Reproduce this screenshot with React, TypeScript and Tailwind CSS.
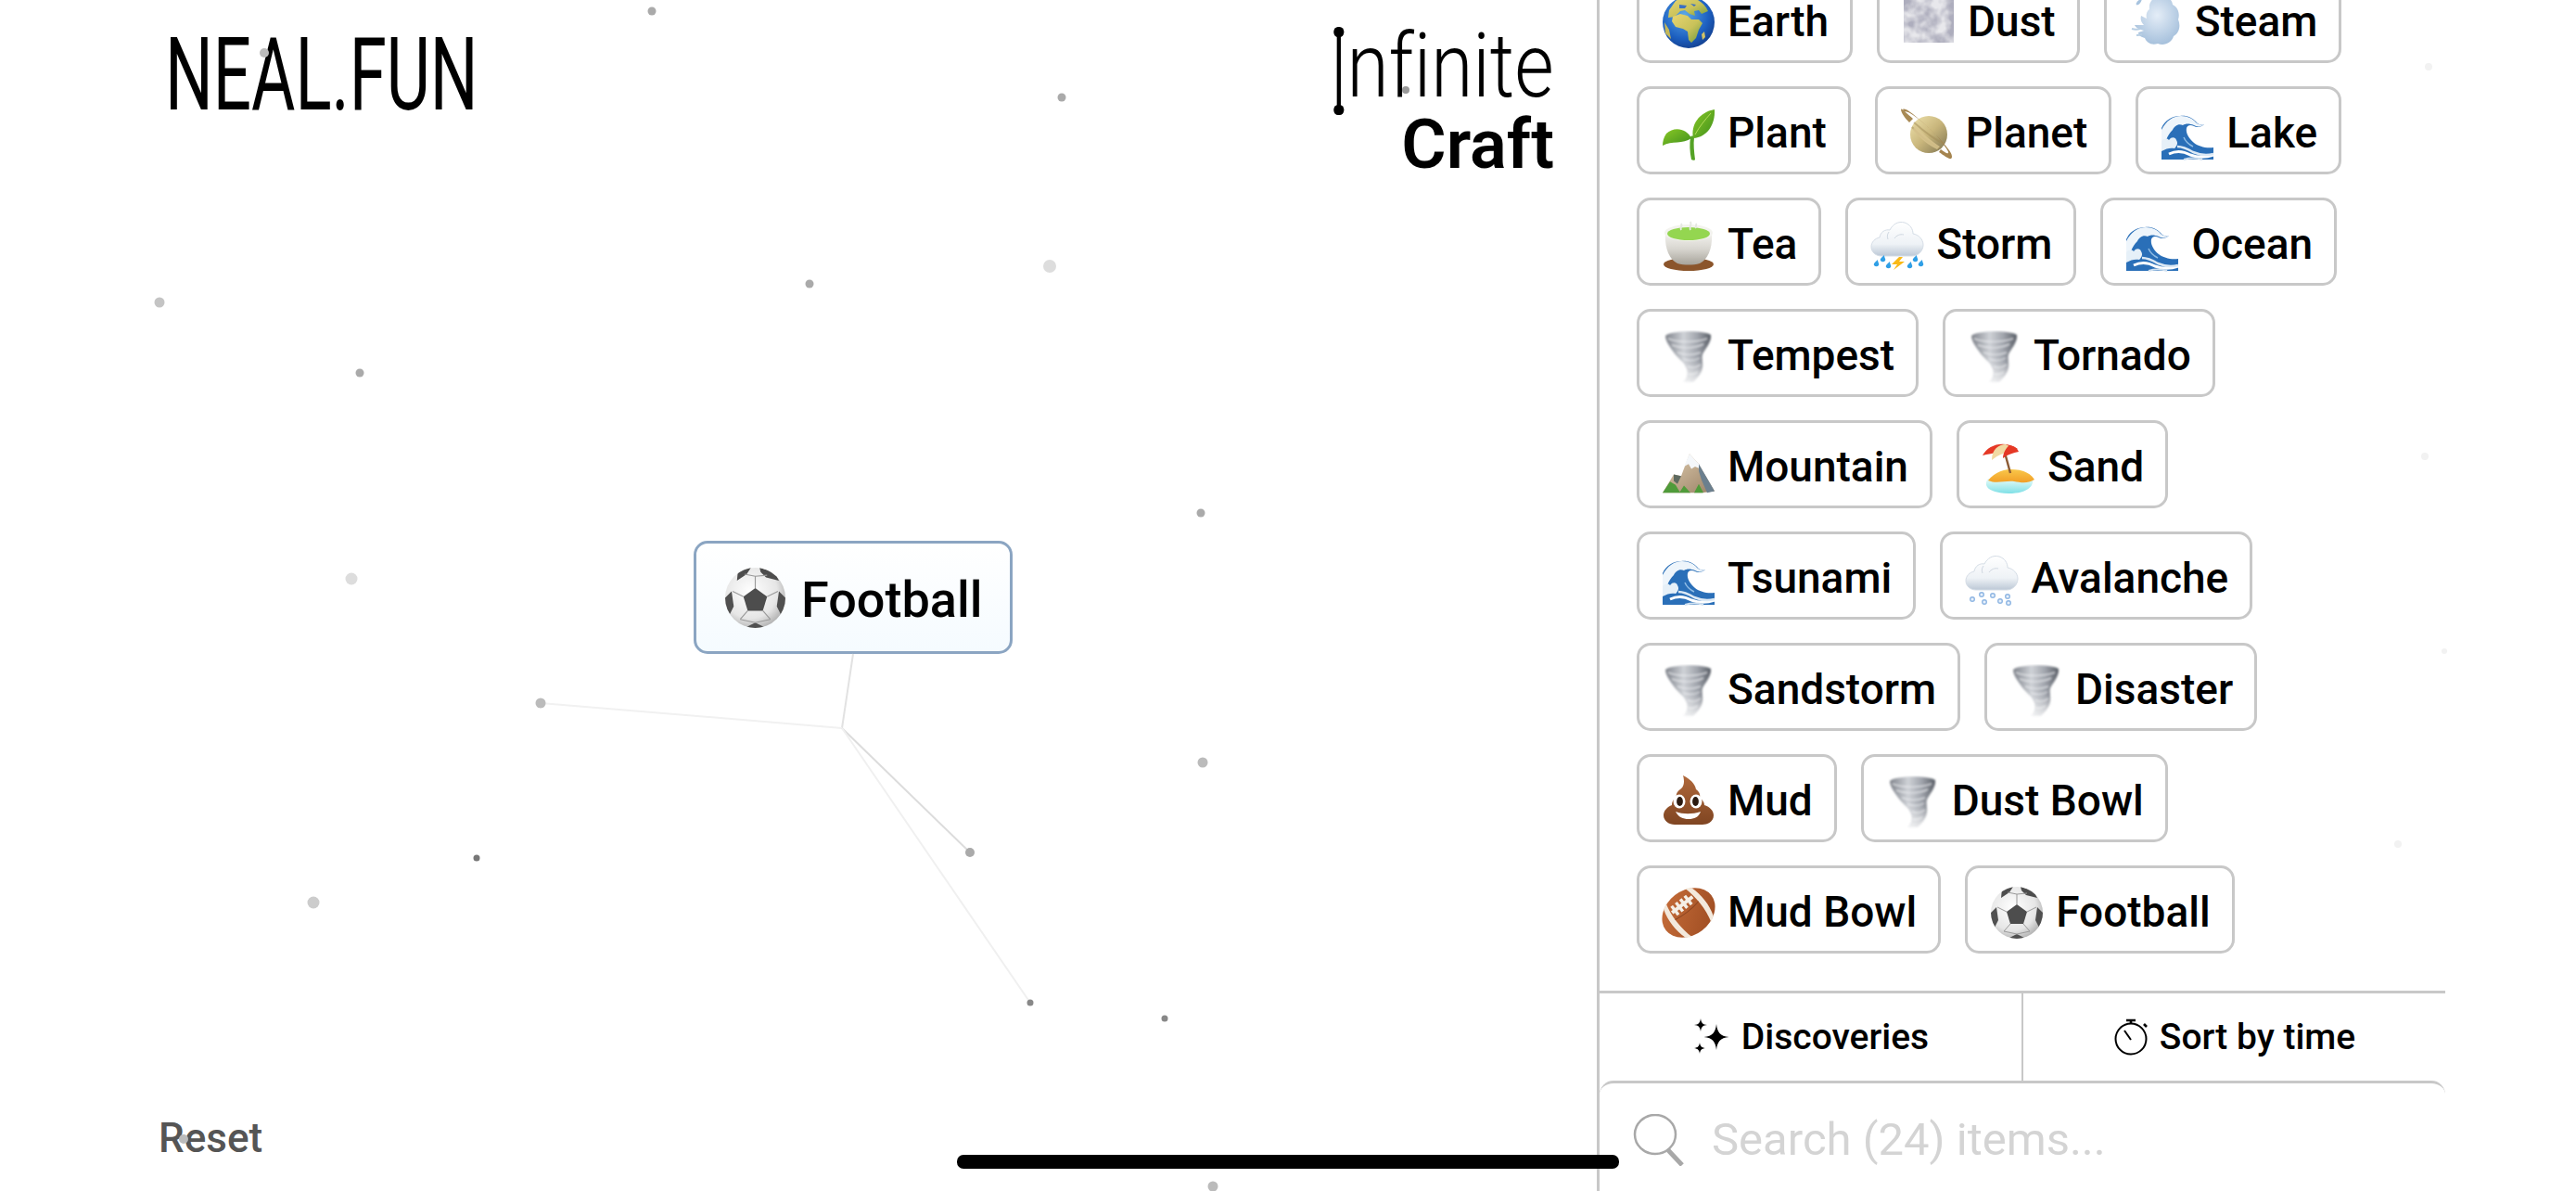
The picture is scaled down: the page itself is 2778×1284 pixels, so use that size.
const dots = [
  { x: 703, y: 12, r: 4.5, fill: '#aaaaaa' },
  { x: 1145, y: 105, r: 4.5, fill: '#aaaaaa' },
  { x: 172, y: 326, r: 5.5, fill: '#c4c4c4' },
  { x: 388, y: 402, r: 4.5, fill: '#aaaaaa' },
  { x: 873, y: 306, r: 4.5, fill: '#aaaaaa' },
  { x: 1132, y: 287, r: 7, fill: '#dddddd' },
  { x: 379, y: 624, r: 6.5, fill: '#dddddd' },
  { x: 1295, y: 553, r: 4.5, fill: '#aaaaaa' },
  { x: 583, y: 758, r: 5.5, fill: '#bbbbbb' },
  { x: 1297, y: 822, r: 5.5, fill: '#bbbbbb' },
  { x: 514, y: 925, r: 3.5, fill: '#777777' },
  { x: 338, y: 973, r: 6.5, fill: '#cccccc' },
  { x: 1046, y: 919, r: 5, fill: '#aaaaaa' },
  { x: 1111, y: 1081, r: 3.5, fill: '#888888' },
  { x: 1256, y: 1098, r: 3.5, fill: '#888888' },
  { x: 1308, y: 1279, r: 5.5, fill: '#bbbbbb' },
  { x: 285, y: 57, r: 5, fill: '#bbbbbb' },
  { x: 1516, y: 97, r: 4, fill: '#999999' },
  { x: 198, y: 1228, r: 5, fill: '#bbbbbb' },
  { x: 2619, y: 72, r: 4, fill: '#f2f2f2' },
  { x: 2615, y: 492, r: 4, fill: '#f2f2f2' },
  { x: 2636, y: 702, r: 3, fill: '#f2f2f2' },
  { x: 2586, y: 910, r: 4, fill: '#f2f2f2' },
];

const items = [
  ['earth', 'Earth'],
  ['dust', 'Dust'],
  ['steam', 'Steam'],
  ['plant', 'Plant'],
  ['planet', 'Planet'],
  ['wave', 'Lake'],
  ['tea', 'Tea'],
  ['storm', 'Storm'],
  ['wave', 'Ocean'],
  ['tornado', 'Tempest'],
  ['tornado', 'Tornado'],
  ['mountain', 'Mountain'],
  ['beach', 'Sand'],
  ['wave', 'Tsunami'],
  ['snow', 'Avalanche'],
  ['tornado', 'Sandstorm'],
  ['tornado', 'Disaster'],
  ['poop', 'Mud'],
  ['tornado', 'Dust Bowl'],
  ['football', 'Mud Bowl'],
  ['soccer', 'Football'],
];

function SharedDefs() {
  return (
    <svg className="absolute h-0 w-0" aria-hidden="true">
      <defs>
        <radialGradient id="earthFill" cx="0.42" cy="0.35" r="0.72">
          <stop offset="0" stopColor="#5aa7e8" />
          <stop offset="0.65" stopColor="#1c5fc0" />
          <stop offset="1" stopColor="#123a86" />
        </radialGradient>
        <linearGradient id="landFill" x1="0" y1="0" x2="1" y2="1">
          <stop offset="0" stopColor="#e8d572" />
          <stop offset="0.55" stopColor="#c9c25a" />
          <stop offset="1" stopColor="#6d9a3e" />
        </linearGradient>
        <filter id="dustNoise" x="0" y="0" width="1" height="1" colorInterpolationFilters="sRGB">
          <feTurbulence type="fractalNoise" baseFrequency="0.06" numOctaves="3" seed="4" />
          <feColorMatrix values="0 0 0 0 0.68  0 0 0 0 0.68  0 0 0 0 0.74  2.6 0 0 0 -0.75" />
        </filter>
        <radialGradient id="steamFill" cx="0.5" cy="0.4" r="0.7">
          <stop offset="0" stopColor="#e4edf7" />
          <stop offset="1" stopColor="#9dbad8" />
        </radialGradient>
        <linearGradient id="leafFill" x1="0" y1="0" x2="1" y2="1">
          <stop offset="0" stopColor="#8ac926" />
          <stop offset="1" stopColor="#3f8f1c" />
        </linearGradient>
        <linearGradient id="planetFill" x1="0" y1="0" x2="1" y2="1">
          <stop offset="0" stopColor="#efe3ad" />
          <stop offset="0.5" stopColor="#c9b67c" />
          <stop offset="1" stopColor="#7d7350" />
        </linearGradient>
        <linearGradient id="bowlFill" x1="0" y1="0" x2="0" y2="1">
          <stop offset="0" stopColor="#f4f3ef" />
          <stop offset="0.5" stopColor="#d8d6d0" />
          <stop offset="1" stopColor="#a7a39a" />
        </linearGradient>
        <linearGradient id="cloudFill" x1="0" y1="0" x2="0" y2="1">
          <stop offset="0" stopColor="#ffffff" />
          <stop offset="0.65" stopColor="#eef2f6" />
          <stop offset="1" stopColor="#bcc8d6" />
        </linearGradient>
        <linearGradient id="tornadoFill" x1="0" y1="0" x2="1" y2="0">
          <stop offset="0" stopColor="#7f838b" />
          <stop offset="0.4" stopColor="#cfd2d7" />
          <stop offset="0.7" stopColor="#a0a4ac" />
          <stop offset="1" stopColor="#5a5f67" />
        </linearGradient>
        <filter id="softBlur">
          <feGaussianBlur stdDeviation="1" />
        </filter>
        <linearGradient id="tornadoFade" x1="0" y1="0" x2="0" y2="1">
          <stop offset="0.55" stopColor="#ffffff" />
          <stop offset="1" stopColor="#ffffff" stopOpacity="0.2" />
        </linearGradient>
        <mask id="tornadoMask">
          <rect width="56" height="58" fill="url(#tornadoFade)" />
        </mask>
        <linearGradient id="rockFill" x1="0" y1="0" x2="1" y2="1">
          <stop offset="0" stopColor="#e2cfb2" />
          <stop offset="1" stopColor="#9a8266" />
        </linearGradient>
        <linearGradient id="seaFill" x1="0" y1="0" x2="0" y2="1">
          <stop offset="0" stopColor="#e6fbf9" />
          <stop offset="1" stopColor="#7fe0e6" />
        </linearGradient>
        <linearGradient id="sandFill" x1="0" y1="0" x2="0" y2="1">
          <stop offset="0" stopColor="#f9c74a" />
          <stop offset="1" stopColor="#f29f27" />
        </linearGradient>
        <linearGradient id="poopFill" x1="0" y1="0" x2="0" y2="1">
          <stop offset="0" stopColor="#b0683a" />
          <stop offset="1" stopColor="#7f4522" />
        </linearGradient>
        <linearGradient id="footballFill" x1="0" y1="0" x2="1" y2="1">
          <stop offset="0" stopColor="#c96f3b" />
          <stop offset="1" stopColor="#9b4a20" />
        </linearGradient>
        <radialGradient id="soccerFill" cx="0.42" cy="0.4" r="0.68">
          <stop offset="0" stopColor="#ffffff" />
          <stop offset="0.65" stopColor="#e6e6e6" />
          <stop offset="1" stopColor="#a5a5a5" />
        </radialGradient>
        <clipPath id="soccerClip">
          <circle cx="28" cy="28" r="28" />
        </clipPath>
        <clipPath id="earthClip">
          <circle cx="28" cy="28" r="28" />
        </clipPath>
      </defs>
    </svg>
  );
}

function CloudShape() {
  return (
    <g>
      <path
        d="M11 39c-6 0-11-4-11-10 0-5 4-9 9-10 1-6 6-9 11-8 3-6 9-10 16-8 6 2 9 7 9 12 6 1 11 6 11 12s-5 12-12 12z"
        fill="url(#cloudFill)"
        stroke="#d5dde6"
        strokeWidth="1"
      />
      <path d="M19 13c-2 3-2 5-1 8M35 16c-4-1-8 1-10 4" stroke="#d0d8e1" strokeWidth="1" fill="none" />
    </g>
  );
}

function EmojiArt({ name }: { name: string }) {
  switch (name) {
    case 'earth':
      return (
        <g>
          <circle cx="28" cy="28" r="28" fill="url(#earthFill)" />
          <g clipPath="url(#earthClip)">
            <path
              d="M14 5c6-4 16-5 24-1 5 3 9 7 11 12l-7 3-3-4-5 1 1 5-6-2-5-4-5 1-6 6-7 1 1-8z"
              fill="url(#landFill)"
            />
            <path
              d="M11 22l8-3 8 2 4 4 8 0 4 4-4 7-3 9-5 5-3-3-1-9-5-3-8-2-4-6z"
              fill="url(#landFill)"
            />
            <path d="M2 28l5 8 2 10-6-6z" fill="#c4b85a" />
            <path d="M42 41l3-3 1 6-3 3z" fill="#d3c365" />
            <path d="M18 9l8 1-2 3-6 0zM30 8l6 1-2 2z" fill="#3a6fc4" />
          </g>
        </g>
      );
    case 'dust':
      return (
        <g>
          <rect x="1" y="0" width="54" height="50" fill="#e8e8ec" />
          <rect x="1" y="0" width="54" height="50" filter="url(#dustNoise)" />
        </g>
      );
    case 'steam':
      return (
        <g>
          <path
            d="M30 0c8-2 15 2 16 9 6 3 8 10 6 16 3 7 1 15-5 18-2 7-10 11-17 8-7 2-12-1-14-6-4-1-7-3-7-6l6-2c-4-1-9-3-10-6l10 0c-3-3-4-6-3-10l6 3c-1-4 0-8 3-10-1-7 3-12 9-14z"
            fill="url(#steamFill)"
          />
          <path d="M7 7c2-3 5-5 6-4-1 3-2 5-4 6-2 1-3 0-2-2z" fill="#a7c3de" />
          <path d="M2 35c3 1 6 1 9 0M7 42c2 0 4 0 6-1" stroke="#b8cfe4" strokeWidth="2" fill="none" />
        </g>
      );
    case 'plant':
      return (
        <g>
          <path d="M31 56c-2-9-2-17-1-24 0-2 4-2 4 0-1 8 0 16 1 24 0 1-3 1-4 0z" fill="#55a326" />
          <path d="M33 33c-3-14 6-28 23-31 1 16-8 30-23 31z" fill="url(#leafFill)" />
          <path d="M31 33C26 22 12 20 4 28 1 32 0 37 0 41c10-6 22-1 31-8z" fill="url(#leafFill)" />
          <path d="M35 29c5-9 10-15 17-23" stroke="#b4dc5a" strokeWidth="1" fill="none" />
        </g>
      );
    case 'planet':
      return (
        <g>
          <path d="M5 5c-4-4-5-4-5-3 0 3 4 9 9 14l4-4c-3-3-6-5-8-7z" fill="#a88a55" />
          <circle cx="30" cy="29" r="20" fill="url(#planetFill)" />
          <path d="M12 21c8 9 18 18 31 23M14 16c9 8 20 17 32 23" stroke="#9f8a56" strokeWidth="2" opacity="0.5" fill="none" />
          <path
            d="M2 2c2-2 9 3 18 11 12 10 24 22 32 33 3 4 4 8 2 9s-7-3-13-7l2-3c4 3 7 5 8 4s-2-5-5-9C39 29 22 13 8 5 5 4 4 4 4 5l-2-3z"
            fill="#a5844f"
          />
          <path d="M13 24c8 9 17 17 26 21l3-3C32 36 22 26 15 19z" fill="#d9c690" opacity="0.8" />
        </g>
      );
    case 'wave':
      return (
        <g>
          <path
            d="M0 56V22C4 13 12 9 20 9c7-1 13 2 17 6 2 3 5 4 9 3-3 3-8 4-11 2-4-2-7-1-8 2-1 5 2 11 8 16 5 4 13 6 21 5v13z"
            fill="#2a6fb8"
          />
          <path
            d="M0 24C5 14 13 9 21 9c7 0 13 3 16 7 2 2 5 3 9 2-3 3-8 3-11 1-5-2-9-2-12 0-5-2-9 1-11 5-3 3-5 6-7 11-2 1-4 3-5 5z"
            fill="#eef5fb"
          />
          <path d="M0 36c3-3 6-3 8-1 3-4 7-3 8 0 2 3 1 6-2 9-4-1-9 0-14 3z" fill="#e6f0f8" />
          <path d="M8 50c8-4 16-3 23 1 8 3 17 3 25 0" stroke="#ffffff" strokeWidth="3" fill="none" />
          <path d="M17 42c7 0 12 3 17 6 7 3 14 4 22 2" stroke="#dce9f5" strokeWidth="2.500" fill="none" />
          <path d="M24 32c2 5 6 8 10 10" stroke="#8fbce4" strokeWidth="1.500" fill="none" />
          <path d="M24 56c7-2 13-2 20 0" stroke="#cfe0f0" strokeWidth="2" fill="none" />
        </g>
      );
    case 'tea':
      return (
        <g>
          <ellipse cx="28" cy="49" rx="27" ry="7" fill="#8b552b" />
          <path d="M3 15h50c1 14-3 28-13 33-7 2-17 2-24 0C6 43 2 29 3 15z" fill="url(#bowlFill)" />
          <ellipse cx="28" cy="15" rx="26" ry="9" fill="#f3f3ee" />
          <ellipse cx="28" cy="16" rx="23" ry="7" fill="#94d650" />
          <path d="M20 12c-2-3 2-4 0-7M30 12c-2-3 2-5 0-9M36 10c-1-2 1-3 0-5" stroke="#e5e8e2" strokeWidth="2" fill="none" />
        </g>
      );
    case 'storm':
      return (
        <g>
          <g transform="translate(0 1)">
            <CloudShape />
          </g>
          <path d="M30 41l-8 8h6l-4 6 12-9h-6l4-5z" fill="#f9b916" />
          {[
            [4, 49],
            [11, 44],
            [17, 51],
            [40, 51],
            [46, 44],
            [52, 49],
          ].map(([x, y]) => (
            <path key={`${x}-${y}`} d={`M${x + 3} ${y - 5}c0 3 2 4 1 6a3 3 0 0 1-5 0c-1-2 2-4 4-6z`} fill="#2f9fe6" />
          ))}
        </g>
      );
    case 'snow':
      return (
        <g>
          <g transform="translate(0 1)">
            <CloudShape />
          </g>
          {[
            [7, 50],
            [17, 45],
            [20, 53],
            [29, 46],
            [37, 52],
            [45, 47],
            [46, 54],
          ].map(([x, y]) => (
            <circle key={`${x}-${y}`} cx={x} cy={y} r="2.3" fill="#e9f1fb" stroke="#8fb6e3" strokeWidth="1.4" />
          ))}
        </g>
      );
    case 'tornado':
      return (
        <g mask="url(#tornadoMask)">
          <g filter="url(#softBlur)">
            <path
              d="M3 6C10 0 44 0 52 5c1 6-4 13-8 19-3 5 0 10-1 16-1 7-6 12-10 16H22c3-3 6-8 4-14-2-7-9-11-14-18C8 18 3 12 3 6z"
              fill="url(#tornadoFill)"
            />
            <path
              d="M6 9c12 5 30 4 42 0M10 16c10 4 24 4 34-1M16 24c8 3 17 3 25 0M22 31c6 2 13 2 18-1M27 39c5 2 10 1 14-2M28 47c3 1 7 0 10-2"
              stroke="#eef0f2"
              strokeWidth="1.4"
              fill="none"
              opacity="0.7"
            />
          </g>
        </g>
      );
    case 'mountain':
      return (
        <g transform="translate(0 8) scale(1 0.86)">
          <path d="M0 55L12 32l8 2L29 6l10 13 8 16 9 18-14 2z" fill="url(#rockFill)" />
          <path d="M29 6l-6 16 5-3 3 6 4-3 4 2 2-3-2-2z" fill="#f5f8fb" />
          <path d="M39 19l17 34-8 2-6-16-3-11z" fill="#6b7f8e" />
          <path d="M0 55l8-14 6 4 5 10zM18 55l5-9 7 9zM34 55l5-11 5 11z" fill="#4f9b3a" />
          <path d="M12 32l8 2-4 10-4-4z" fill="#5e6a60" />
        </g>
      );
    case 'beach':
      return (
        <g>
          <path d="M6 40c-4 5-5 15 22 16 22 0 27-9 26-15z" fill="url(#seaFill)" />
          <path d="M6 42c6-8 16-12 24-12 10 0 20 2 26 11-8 5-15 3-22 2-10-1-19 3-28-1z" fill="url(#sandFill)" />
          <path d="M24 12l6 22" stroke="#8c5a34" strokeWidth="2.4" />
          <path d="M0 15C6 3 24-2 38 8 28 8 22 10 18 12 12 12 5 14 0 15z" fill="#e53825" />
          <path d="M10 20C10 8 18 3 25 3c4 2 7 4 9 8-8 0-17 3-24 9z" fill="#f1d9a2" />
          <path d="M22 18c0-5 3-11 7-14 6 1 9 4 10 7-6 1-12 3-17 7z" fill="#e53825" />
        </g>
      );
    case 'poop':
      return (
        <g>
          <path
            d="M22 0c8 4 13 9 14 15 3 2 5 5 4 9 3 2 5 5 5 8 6 2 10 6 10 11 0 7-7 10-12 10H13C7 53 1 49 1 43c0-5 4-9 9-11 0-4 2-7 5-8-1-4 1-7 4-9 4-3 5-8 3-15z"
            fill="url(#poopFill)"
          />
          <ellipse cx="18" cy="28" rx="6.5" ry="7.5" fill="#ffffff" />
          <ellipse cx="36" cy="28" rx="6.5" ry="7.5" fill="#ffffff" />
          <ellipse cx="18.5" cy="28" rx="3.4" ry="5" fill="#2b1a10" />
          <ellipse cx="35.5" cy="28" rx="3.4" ry="5" fill="#2b1a10" />
          <path d="M14 39c8 3 18 3 27 0-2 6-7 8-13 8s-11-2-14-8z" fill="#ffffff" />
        </g>
      );
    case 'football':
      return (
        <g>
          <g transform="rotate(-38 28 28)">
            <ellipse cx="28" cy="28" rx="31" ry="24" fill="url(#footballFill)" />
            <path d="M9 9c-4 12-4 26 0 38l6 4c-4-14-4-32 0-46z" fill="#f3e9dc" />
            <path d="M47 9c4 12 4 26 0 38l-6 4c4-14 4-32 0-46z" fill="#f3e9dc" />
            <path d="M14 17h28" stroke="#f5efe6" strokeWidth="4" />
            {[18, 24, 30, 36].map((x) => (
              <path key={x} d={`M${x} 11v12`} stroke="#f5efe6" strokeWidth="3.4" />
            ))}
            <path d="M12 25c10 2 22 2 32 0" stroke="#8a4420" strokeWidth="1" fill="none" />
          </g>
        </g>
      );
    case 'soccer':
      return (
        <g>
          <circle cx="28" cy="28" r="28" fill="url(#soccerFill)" />
          <g clipPath="url(#soccerClip)">
            <path d="M28 19l11 8-4 13H21l-4-13z" fill="#4d4d4d" />
            <path d="M12 2L24 0 20 6l-9 6zM32 0l14 4 4 8-12-3-5-5z" fill="#4d4d4d" />
            <path d="M0 28l6-6 2 14-4 8-4-6zM56 28l-6-6-2 14 4 8 4-6z" fill="#505050" />
            <path d="M18 56l10-5 10 5z" fill="#505050" />
            <path
              d="M28 19V8M39 27l10-5M35 40l7 8M21 40l-7 8M17 27L7 22M28 8l-10-2M28 8l11-1M14 48l14 3 14-3"
              stroke="#9a9a9a"
              strokeWidth="1"
              fill="none"
            />
          </g>
        </g>
      );
    default:
      return null;
  }
}

function Emoji({ name, className }: { name: string; className: string }) {
  return (
    <svg viewBox="0 0 56 56" className={className} aria-hidden="true" overflow="visible">
      <EmojiArt name={name} />
    </svg>
  );
}

function Item({ icon, label }: { icon: string; label: string }) {
  return (
    <div className="flex h-[95px] items-center gap-[14px] rounded-[15px] border-[3px] border-[#c8c8c8] bg-white pr-[23px] pl-[25px] text-[46px] font-medium text-black">
      <Emoji name={icon} className="mt-1.5 h-14 w-14 shrink-0" />
      <span className="mt-1.5 whitespace-nowrap">{label}</span>
    </div>
  );
}

function SparklesIcon() {
  return (
    <svg viewBox="0 0 40 40" className="h-10 w-10 shrink-0" fill="#000000" aria-hidden="true">
      <path d="M26 6c1 9 4 13 13.500 14C30 21 27 25 26 34c-1-9-4-13-13.500-14C22 19 25 15 26 6z" />
      <path d="M9 0c.7 5 2.400 6.500 7 7-4.600.5-6.300 2-7 7-.7-5-2.400-6.500-7-7 4.600-.5 6.300-2 7-7z" />
      <path d="M8 26c.6 4 2 5.400 6 6-4 .6-5.400 2-6 6-.6-4-2-5.400-6-6 4-.6 5.400-2 6-6z" />
    </svg>
  );
}

function StopwatchIcon() {
  return (
    <svg viewBox="0 0 40 40" className="h-10 w-10 shrink-0" fill="none" stroke="#000000" aria-hidden="true">
      <circle cx="19" cy="22" r="16.500" strokeWidth="2" />
      <path d="M14 2h10M19 2v3" strokeWidth="2.600" />
      <path d="M33 6l3 3" strokeWidth="2.600" />
      <path d="M12 13l7 10" strokeWidth="2" />
    </svg>
  );
}

function SearchIcon() {
  return (
    <svg viewBox="0 0 56 56" className="h-14 w-14 shrink-0" fill="none" stroke="#a8a8a8" aria-hidden="true">
      <ellipse cx="25" cy="22" rx="22" ry="21" strokeWidth="2.500" />
      <path d="M39 39l15 16" strokeWidth="5" />
    </svg>
  );
}

export default function App() {
  return (
    <div className="relative flex h-screen w-screen overflow-hidden bg-white font-['Roboto',sans-serif] text-black">
      <SharedDefs />

      <div className="relative flex h-full w-[1722px] shrink-0 flex-col">
        <div className="flex items-start justify-between pt-[23px] pr-[46px] pl-[178px]">
          <div className="mt-[3px] w-[326px] origin-left scale-x-[0.66] text-[110px] leading-[110px] font-normal whitespace-nowrap">
            NEAL.FUN
          </div>
          <div className="flex flex-col items-end">
            <div className="h-[95px] origin-right scale-x-[0.855] text-[96px] leading-[96px] font-light whitespace-nowrap [font-variant-ligatures:none]">
              <span className="relative text-transparent">
                I
                <span className="absolute top-[20px] bottom-[9px] left-[13px] w-[5px] bg-black" />
                <span className="absolute top-[14px] left-[9px] h-[11px] w-[13px] rounded-full bg-black" />
                <span className="absolute bottom-[3px] left-[9px] h-[11px] w-[13px] rounded-full bg-black" />
              </span>
              nfinite
            </div>
            <div className="text-[74px] leading-[75px] font-semibold">Craft</div>
          </div>
        </div>

        <div className="absolute top-[583px] left-[748px] flex h-[122px] items-center gap-[17px] rounded-[15px] border-[3px] border-[#8ba5c2] bg-linear-to-b from-white to-[#f5fbff] pr-[30px] pl-[31px] text-[54px] font-medium">
          <Emoji name="soccer" className="h-[65px] w-[65px] shrink-0" />
          <span className="mt-1 whitespace-nowrap">Football</span>
        </div>

        <div className="mt-auto pb-[33px] pl-[171px] text-[44px] leading-[48px] font-medium text-[#555555]">Reset</div>
      </div>

      <div className="flex h-full w-[915px] shrink-0 flex-col border-l-[3px] border-[#c8c8c8]">
        <div className="flex min-h-0 flex-1 flex-col justify-end overflow-hidden pb-[40px] pl-[40px]">
          <div className="flex shrink-0 flex-wrap gap-x-[26px] gap-y-[25px] pr-[60px]">
            {items.map(([icon, label]) => (
              <Item key={label} icon={icon} label={label} />
            ))}
          </div>
        </div>

        <div className="flex h-[97px] shrink-0 border-t-[3px] border-[#c8c8c8] text-[39px] font-medium">
          <div className="flex flex-1 items-center justify-center gap-[13px] border-r-2 border-[#c8c8c8]">
            <SparklesIcon />
            <span>Discoveries</span>
          </div>
          <div className="flex flex-1 items-center justify-center gap-[10px]">
            <StopwatchIcon />
            <span>Sort by time</span>
          </div>
        </div>

        <div className="flex h-[119px] shrink-0 items-start gap-[30px] rounded-t-[15px] border-t-[3px] border-[#c8c8c8] pt-[33px] pl-[35px]">
          <SearchIcon />
          <input
            className="w-[500px] bg-transparent text-[49px] leading-[56px] text-black outline-none placeholder:text-[#d4d4d4]"
            placeholder="Search (24) items..."
          />
        </div>
      </div>

      <svg className="pointer-events-none absolute inset-0 h-full w-full" aria-hidden="true">
        <path d="M920 705L908 785" stroke="#e2e2e2" strokeWidth="2" fill="none" />
        <path d="M583 758L908 785" stroke="#f1f1f1" strokeWidth="2" fill="none" />
        <path d="M908 785L1046 919" stroke="#dcdcdc" strokeWidth="2" fill="none" />
        <path d="M908 785L1111 1081" stroke="#f0f0f0" strokeWidth="2" fill="none" />
        {dots.map((dot) => (
          <circle key={`${dot.x}-${dot.y}`} cx={dot.x} cy={dot.y} r={dot.r} fill={dot.fill} />
        ))}
      </svg>

      <div className="absolute top-[1245px] left-[1032px] h-[15px] w-[714px] rounded-[7px] bg-black" />
    </div>
  );
}
